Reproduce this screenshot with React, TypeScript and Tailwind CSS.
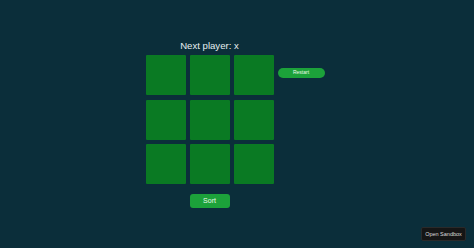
import React from "react";

const cells = Array.from({ length: 9 }, (_, i) => i);

export default function App() {
  return (
    <div className="relative h-screen w-full overflow-hidden bg-[#0b2e3a] pt-[38px] font-['Liberation_Sans',Arial,sans-serif]">
      <div className="flex items-start justify-center gap-[4px] pr-[4px]">
        {/* Game column */}
        <div className="flex w-[128px] flex-col items-center">
          <div className="h-[17px] text-[9.6px] leading-[15px] text-[#e6eef0]">Next player: x</div>
          <div className="grid grid-cols-3 gap-x-[4px] gap-y-[4.5px]">
            {cells.map((c) => (
              <div key={c} className="h-[40px] w-[40px] rounded-[1px] bg-[#0a7a23]" />
            ))}
          </div>
          <button className="mt-[10px] flex h-[14px] w-[40px] items-center justify-center rounded-[3px] bg-[#1ca23a] text-[7px] text-[#eafbe9]">
            Sort
          </button>
        </div>
        <button className="mt-[30px] flex h-[10px] w-[47px] items-center justify-center rounded-full bg-[#1ca23a] text-[5px] text-[#eafbe9]">
          Restart
        </button>
      </div>

      <div className="absolute bottom-[7px] right-[8px] flex h-[14px] w-[45px] items-center justify-center rounded-[2px] border border-[#2a2a2a] bg-[#151515] text-[5.5px] text-[#dddddd]">
        Open Sandbox
      </div>
    </div>
  );
}
